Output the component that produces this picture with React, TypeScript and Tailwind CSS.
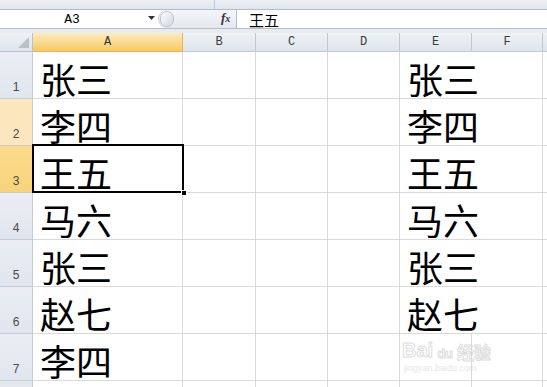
import React from "react";

const colLabels = ["A", "B", "C", "D", "E", "F", ""];
const rowsA = ["张三", "李四", "王五", "马六", "张三", "赵七", "李四"];
const rowsE = ["张三", "李四", "王五", "马六", "张三", "赵七", ""];

const cjk = { fontFamily: '"Noto Sans CJK SC", "Noto Sans", sans-serif' };
const mono = { fontFamily: '"Liberation Mono", "DejaVu Sans Mono", monospace' };

function RowHeader({ n }: { n: number }) {
  let bg = "bg-gradient-to-b from-[#eaeef4] to-[#e1e6ee]";
  if (n === 2) bg = "bg-[#fbe6bd]";
  if (n === 3) bg = "bg-gradient-to-b from-[#fbdb8c] to-[#f8d37a]";
  return (
    <div
      className={`${bg} h-[47px] border-b border-r border-[#c5ccd6] flex items-end justify-center pb-[5px] text-[12px] text-[#4a4a4a] leading-none`}
      style={{ fontFamily: '"Liberation Sans", Arial, sans-serif' }}
    >
      {n}
    </div>
  );
}

function Cell({ text, spill }: { text: string; spill?: boolean }) {
  return (
    <div
      className={`h-[47px] border-b ${spill && text ? "border-r-0 border-r-transparent" : "border-r"} border-[#d9d9d9] flex items-end pl-[7px]`}
    >
      {text ? (
        <span className="relative z-10 text-[36px] leading-[40px] text-black whitespace-nowrap" style={cjk}>
          {text}
        </span>
      ) : null}
    </div>
  );
}

export default function App() {
  return (
    <div className="w-[547px] h-[387px] overflow-hidden bg-white flex flex-col">
      {/* top strip */}
      <div className="shrink-0 h-[9px] bg-gradient-to-b from-[#eef1f5] to-[#dfe5ec] flex">
        <div className="w-[215px] border-r border-[#c3cad3]" />
        <div className="flex-1" />
      </div>
      {/* formula bar */}
      <div className="shrink-0 h-[20px] border-y border-[#b5bdc7] flex bg-white">
        <div className="w-[158px] flex items-center relative">
          <span className="flex-1 text-center text-[13px] text-black leading-none pr-[14px]" style={mono}>
            A3
          </span>
          <svg className="absolute left-[148px] top-[6px]" width="7" height="4" viewBox="0 0 7 4">
            <path d="M0 0 L7 0 L3.5 4 Z" fill="#333" />
          </svg>
        </div>
        <div className="w-[79px] flex items-center bg-gradient-to-b from-[#f4f6f9] to-[#e3e8ee] rounded-l-[9px] border-l border-[#c9d0d9] relative">
          <div className="ml-[1px] w-[14px] h-[16px] rounded-full bg-gradient-to-br from-[#ffffff] to-[#cfd6de] border border-[#bcc4ce]" />
          <span
            className="absolute left-[62px] top-[1px] text-[13px] italic font-bold text-[#333] leading-none"
            style={{ fontFamily: '"Liberation Serif", serif' }}
          >
            f<span className="text-[10px]">x</span>
          </span>
          <div className="absolute right-0 top-0 bottom-0 border-r border-[#b5bdc7]" />
        </div>
        <div className="flex-1 flex items-center pl-[12px]">
          <span className="text-[15px] text-black leading-none" style={cjk}>
            王五
          </span>
        </div>
      </div>
      {/* gap */}
      <div className="shrink-0 h-[4px] bg-[#e8ecf1]" />
      {/* sheet */}
      <div className="relative shrink-0">
        <div className="grid grid-cols-[33px_150px_73px_72px_72px_72px_71px_1fr] bg-white">
          {/* corner */}
          <div className="h-[19px] border-b border-r border-[#b8c2ce] bg-gradient-to-b from-[#eef1f5] to-[#dee4eb] relative">
            <svg className="absolute right-[3px] bottom-[3px]" width="11" height="11" viewBox="0 0 11 11">
              <path d="M11 0 L11 11 L0 11 Z" fill="#b9c1cb" />
            </svg>
          </div>
          {colLabels.map((c, i) => (
            <div
              key={i}
              className={`h-[19px] border-b border-r flex items-center justify-center text-[12px] leading-none ${
                i === 0
                  ? "bg-gradient-to-b from-[#fdecbd] to-[#f6c95f] border-[#e8b450] text-[#333]"
                  : "bg-gradient-to-b from-[#eef2f6] to-[#dfe5ec] border-[#c0c9d3] text-[#3c3c3c]"
              }`}
              style={mono}
            >
              {c}
            </div>
          ))}
          {rowsA.map((t, r) => (
            <React.Fragment key={r}>
              <RowHeader n={r + 1} />
              <Cell text={t} />
              <Cell text="" />
              <Cell text="" />
              <Cell text="" />
              <Cell text={rowsE[r]} spill />
              <Cell text="" />
              <Cell text="" />
            </React.Fragment>
          ))}
          <div className="h-[20px] border-r border-[#c5ccd6] bg-[#e3e8ef]" />
          {[0, 1, 2, 3, 4, 5, 6].map((i) => (
            <div key={i} className="h-[20px] border-r border-[#d9d9d9]" />
          ))}
        </div>
        {/* selection A3 */}
        <div className="absolute left-[32px] top-[111px] w-[152px] h-[49px] border-2 border-black pointer-events-none z-20" />
        <div className="absolute left-[181px] top-[157px] w-[6px] h-[6px] bg-black border border-white z-20" />
        {/* watermark */}
        <div className="absolute left-[402px] top-[307px] flex flex-col items-start opacity-60 pointer-events-none z-20">
          <div className="flex items-end gap-[4px]">
            <span
              className="text-[20px] font-bold text-white leading-none"
              style={{ fontFamily: '"Liberation Sans", Arial, sans-serif', WebkitTextStroke: "1px #c9c9c9" }}
            >
              Bai
            </span>
            <span
              className="text-[13px] font-bold text-white leading-none"
              style={{ fontFamily: '"Liberation Sans", Arial, sans-serif', WebkitTextStroke: "1px #c9c9c9" }}
            >
              du
            </span>
            <span
              className="text-[17px] font-bold text-white leading-none"
              style={{ fontFamily: '"Noto Sans CJK SC", sans-serif', WebkitTextStroke: "1px #c9c9c9" }}
            >
              经验
            </span>
          </div>
          <span
            className="text-[9px] text-[#d6d6d6] leading-none mt-[4px] ml-[2px]"
            style={{ fontFamily: '"Liberation Sans", Arial, sans-serif' }}
          >
            jingyan.baidu.com
          </span>
        </div>
      </div>
    </div>
  );
}
